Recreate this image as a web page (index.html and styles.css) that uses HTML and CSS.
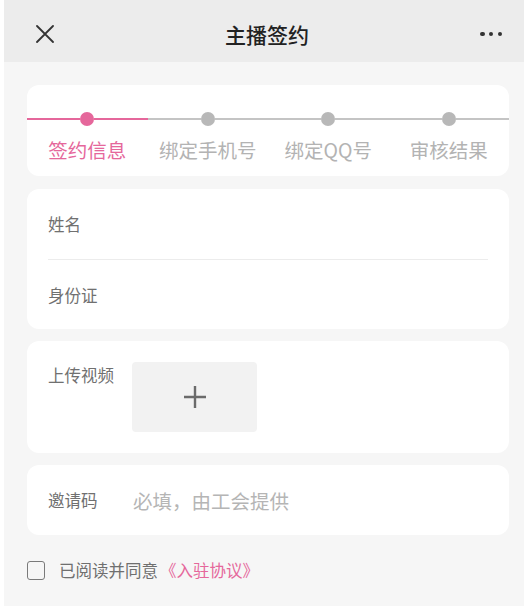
FILE: index.html
```html
<!DOCTYPE html>
<html lang="zh-CN">
<head>
<meta charset="utf-8">
<title>主播签约</title>
<link rel="stylesheet" href="styles.css">
</head>
<body>
<div class="app">
  <header class="nav">
    <span class="nav-close">
      <svg width="18" height="18" viewBox="0 0 18 18"><path d="M1 1 L17 17 M17 1 L1 17" stroke="#333" stroke-width="1.8" stroke-linecap="round" fill="none"/></svg>
    </span>
    <h1 class="nav-title">主播签约</h1>
    <span class="nav-more"><i></i><i></i><i></i></span>
  </header>

  <main class="content">
    <section class="card steps">
      <div class="step active first">
        <div class="step-track"><span class="seg seg-l"></span><span class="dot"></span><span class="seg seg-r"></span></div>
        <div class="step-label">签约信息</div>
      </div>
      <div class="step">
        <div class="step-track"><span class="seg"></span><span class="dot"></span><span class="seg"></span></div>
        <div class="step-label">绑定手机号</div>
      </div>
      <div class="step">
        <div class="step-track"><span class="seg"></span><span class="dot"></span><span class="seg"></span></div>
        <div class="step-label">绑定QQ号</div>
      </div>
      <div class="step">
        <div class="step-track"><span class="seg"></span><span class="dot"></span><span class="seg"></span></div>
        <div class="step-label">审核结果</div>
      </div>
    </section>

    <section class="card form">
      <div class="row">姓名</div>
      <div class="row">身份证</div>
    </section>

    <section class="card upload">
      <div class="upload-label">上传视频</div>
      <div class="upload-box">
        <svg width="22" height="22" viewBox="0 0 22 22"><path d="M11 0 V22 M0 11 H22" stroke="#6b6b6b" stroke-width="2.4" fill="none"/></svg>
      </div>
    </section>

    <section class="card invite">
      <span class="invite-label">邀请码</span>
      <span class="invite-placeholder">必填，由工会提供</span>
    </section>

    <div class="agree">
      <span class="checkbox"></span>
      <span class="agree-text">已阅读并同意<span class="agree-link">《入驻协议》</span></span>
    </div>
  </main>
</div>
</body>
</html>
```

FILE: styles.css
```css
* { box-sizing: border-box; }

html, body {
  margin: 0;
  padding: 0;
}

body {
  background: #ffffff;
  padding-left: 4px;
  font-family: "Noto Sans CJK SC", "Noto Sans", sans-serif;
}

.app {
  background: #f6f6f6;
  min-height: 606px;
}

.nav {
  height: 62px;
  background: #ececec;
  display: flex;
  align-items: center;
  padding: 6px 22px 0 32px;
}

.nav-close {
  width: 18px;
  height: 18px;
  display: flex;
}

.nav-title {
  flex: 1;
  margin: 0;
  text-align: center;
  font-size: 21px;
  font-weight: 500;
  color: #222;
  line-height: 28px;
}

.nav-more {
  width: 22px;
  display: flex;
  justify-content: space-between;
  align-items: center;
}

.nav-more i {
  width: 4.5px;
  height: 4.5px;
  border-radius: 50%;
  background: #333;
}

.content {
  padding: 23px 15px 0 23px;
  display: flex;
  flex-direction: column;
  gap: 12px;
}

.card {
  background: #fff;
  border-radius: 12px;
}

/* steps */
.steps {
  display: grid;
  grid-template-columns: repeat(4, 1fr);
  padding: 27px 0 14px;
  margin-bottom: 1px;
}

.step {
  display: flex;
  flex-direction: column;
  align-items: center;
}

.step-track {
  width: 100%;
  height: 14px;
  display: flex;
  align-items: center;
}

.seg {
  flex: 1;
  height: 1.5px;
  background: #c4c4c4;
}

.dot {
  width: 14px;
  height: 14px;
  border-radius: 50%;
  background: #b8b8b8;
}

.step.active .seg { background: #e5679b; }
.step.active .dot { background: #e5679b; }

.step-label {
  margin-top: 12px;
  font-size: 19.5px;
  line-height: 24px;
  color: #b3b3b3;
  white-space: nowrap;
}

.step.active .step-label { color: #e5679b; }

/* form */
.form {
  padding: 0 21px;
}

.row {
  height: 70px;
  display: flex;
  align-items: center;
  font-size: 16.5px;
  color: #707070;
}

.row + .row {
  border-top: 1px solid #ececec;
}

/* upload */
.upload {
  display: flex;
  align-items: flex-start;
  gap: 18px;
  padding: 21px 21px;
}

.upload-label {
  font-size: 16.5px;
  line-height: 26px;
  color: #707070;
}

.upload-box {
  width: 125px;
  height: 70px;
  background: #f2f2f2;
  border-radius: 4px;
  display: flex;
  align-items: center;
  justify-content: center;
}

/* invite */
.invite {
  height: 70px;
  display: flex;
  align-items: center;
  padding: 0 21px;
}

.invite-label {
  width: 85px;
  font-size: 16.5px;
  color: #707070;
}

.invite-placeholder {
  font-size: 19.5px;
  color: #b5b5b5;
}

/* agreement */
.agree {
  display: flex;
  align-items: center;
  gap: 14px;
  margin-top: 11px;
}

.checkbox {
  width: 18px;
  height: 19px;
  border: 1.5px solid #7a7a7a;
  border-radius: 3px;
}

.agree-text {
  font-size: 16.5px;
  color: #6f6f6f;
}

.agree-link {
  color: #e5679b;
  margin-left: 2px;
}
```
